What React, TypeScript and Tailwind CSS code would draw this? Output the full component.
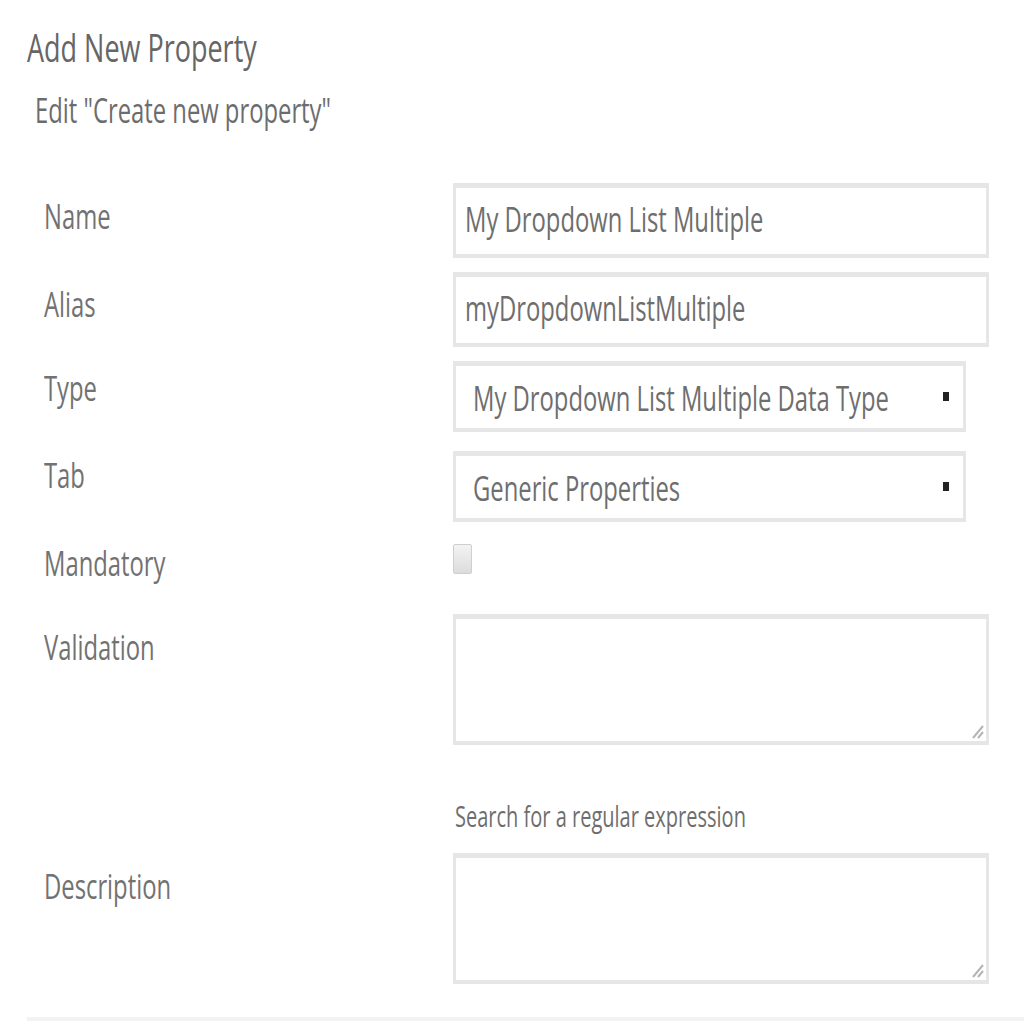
import type React from "react"

// narrow text: the screenshot is squeezed sideways, so every run of text is condensed
function T({ children, className = "" }: { children: React.ReactNode; className?: string }) {
  return (
    <span className={`inline-block origin-left whitespace-nowrap ${className || "scale-x-[0.7]"}`}>
      {children}
    </span>
  )
}

function Field({
  label,
  labelTop,
  className = "",
  children,
}: {
  label: string
  labelTop: string
  className?: string
  children: React.ReactNode
}) {
  return (
    <div className={`flex ${className}`}>
      <div className={`w-[409px] shrink-0 text-[34px] leading-[34px] text-[#727272] ${labelTop}`}>
        <T>{label}</T>
      </div>
      <div className="w-[536px]">{children}</div>
    </div>
  )
}

function TextBox({ value }: { value: string }) {
  return (
    <div className="h-[75px] overflow-hidden border-[3px] border-t-[5px] border-b-[4px] border-[#e6e6e6] bg-white pl-[9px] pt-[14px] text-[34px] leading-[34px] text-[#6e6e6e]">
      <T>{value}</T>
    </div>
  )
}

function SelectBox({ value }: { value: string }) {
  return (
    <div className="relative h-[71px] w-[513px] overflow-hidden border-[3px] border-t-[5px] border-b-[4px] border-[#e6e6e6] bg-white pl-[17px] pt-[15px] text-[34px] leading-[34px] text-[#6e6e6e]">
      <T>{value}</T>
      {/* dropdown caret */}
      <div className="absolute right-[14px] top-[26px] h-[9px] w-[6px] bg-[#222]" />
    </div>
  )
}

function AreaBox() {
  return (
    <div className="relative h-[131px] border-[3px] border-t-[5px] border-b-[4px] border-[#e6e6e6] bg-white">
      <svg
        className="absolute bottom-[2px] right-[2px]"
        width="14"
        height="16"
        viewBox="0 0 14 16"
      >
        <path d="M13 3 L3 15" stroke="#b5b5b5" strokeWidth="2" />
        <path d="M13 9 L8 15" stroke="#b5b5b5" strokeWidth="2" />
      </svg>
    </div>
  )
}

export default function App() {
  return (
    <div className="min-h-[1024px] bg-white font-['Open_Sans',sans-serif]">
      <div className="pl-[27px] pt-[28px]">
        <h1 className="text-[38px] font-normal leading-[38px] text-[#666]">
          <T className="scale-x-[0.71]">Add New Property</T>
        </h1>
        <p className="mt-[27px] pl-[8px] text-[34px] leading-[34px] text-[#6c6c6c]">
          <T>Edit "Create new property"</T>
        </p>
      </div>

      <form className="mt-[56px] pl-[44px]">
        <Field label="Name" labelTop="pt-[16px]">
          <TextBox value="My Dropdown List Multiple" />
        </Field>
        <Field label="Alias" labelTop="pt-[15px]" className="mt-[14px]">
          <TextBox value="myDropdownListMultiple" />
        </Field>
        <Field label="Type" labelTop="pt-[10px]" className="mt-[14px]">
          <SelectBox value="My Dropdown List Multiple Data Type" />
        </Field>
        <Field label="Tab" labelTop="pt-[7px]" className="mt-[19px]">
          <SelectBox value="Generic Properties" />
        </Field>
        <Field label="Mandatory" labelTop="pt-[2px]" className="mt-[22px]">
          <div className="h-[30px] w-[19px] rounded-[2px] border border-[#cfcfcf] bg-gradient-to-b from-[#f3f3f3] to-[#dcdcdc]" />
        </Field>
        <Field label="Validation" labelTop="pt-[16px]" className="mt-[34px]">
          <AreaBox />
          <p className="mt-[56px] pl-[2px] text-[29px] leading-[29px] text-[#6e6e6e]">
            <T className="scale-x-[0.69]">Search for a regular expression</T>
          </p>
        </Field>
        <Field label="Description" labelTop="pt-[16px]" className="mt-[23px]">
          <AreaBox />
        </Field>
      </form>

      <div className="ml-[27px] mt-[33px] h-[4px] bg-[#f3f3f3]" />
    </div>
  )
}
